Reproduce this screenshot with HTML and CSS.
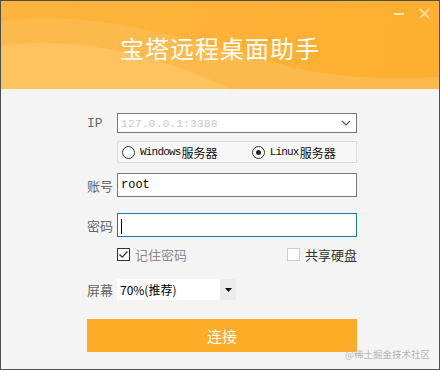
FILE: index.html
```html
<!DOCTYPE html>
<html lang="zh-CN">
<head>
    <meta charset="UTF-8">
    <title>宝塔远程桌面助手</title>
    <link rel="stylesheet" href="styles.css">
</head>
<body>

    <div class="window">
        <div class="header">
            <svg class="waves" width="438" height="88" viewBox="0 0 438 88" preserveAspectRatio="none">
                <path d="M0 20 C 80 10, 160 30, 250 55 C 300 70, 340 80, 438 76 L438 88 L0 88 Z" fill="#fdba4c"/>
                <path d="M0 45 C 70 35, 150 50, 230 88 L0 88 Z" fill="#fec25e"/>
            </svg>
            <div class="controls">
                <span class="min"></span>
                <svg class="close" width="11" height="11" viewBox="0 0 11 11">
                    <path d="M1 1 L10 10 M10 1 L1 10" stroke="#fde6b8" stroke-width="1.6"/>
                </svg>
            </div>
            <h1>宝塔远程桌面助手</h1>
        </div>

        <div class="form">
            <div class="row row-ip">
                <span class="label mono">IP</span>
                <div class="combo">
                    <span class="mono faded">127.0.0.1:3388</span>
                    <svg width="10" height="6" viewBox="0 0 10 6">
                        <path d="M1 1 L5 5 L9 1" fill="none" stroke="#555" stroke-width="1.1"/>
                    </svg>
                </div>
            </div>

            <div class="row row-os">
                <span class="label"></span>
                <div class="radios">
                    <span class="radio"><i class="dot"></i><span class="mono narrow">Windows</span>服务器</span>
                    <span class="radio on"><i class="dot"></i><span class="mono narrow">Linux</span>服务器</span>
                </div>
            </div>

            <div class="row row-user">
                <span class="label">账号</span>
                <div class="field mono">root</div>
            </div>

            <div class="row row-pass">
                <span class="label">密码</span>
                <div class="field focus"><i class="caret"></i></div>
            </div>

            <div class="row row-checks">
                <span class="label"></span>
                <div class="checks">
                    <span class="check on">
                        <svg width="13" height="13" viewBox="0 0 13 13">
                            <rect x="0.5" y="0.5" width="12" height="12" fill="#fff" stroke="#333"/>
                            <path d="M2.5 6.5 L5.2 9.2 L10.5 3.5" fill="none" stroke="#333" stroke-width="1.2"/>
                        </svg>
                        记住密码
                    </span>
                    <span class="check">
                        <svg width="13" height="13" viewBox="0 0 13 13">
                            <rect x="0.5" y="0.5" width="12" height="12" fill="#fff" stroke="#ccc"/>
                        </svg>
                        共享硬盘
                    </span>
                </div>
            </div>

            <div class="row row-screen">
                <span class="label">屏幕</span>
                <div class="dropdown">
                    <span class="value">70%(推荐)</span>
                    <span class="arrow">
                        <svg width="7" height="4" viewBox="0 0 7 4"><path d="M0 0 L7 0 L3.5 4 Z" fill="#111"/></svg>
                    </span>
                </div>
            </div>

            <button class="connect">连接</button>
        </div>

        <span class="watermark">@稀土掘金技术社区</span>
    </div>

</body>
</html>
```

FILE: styles.css
```css
body {
    margin: 0;
    font-family: "Noto Sans CJK SC", "Noto Sans", sans-serif;
    background-color: #f3f3f3;
}
.window {
    position: relative;
    width: 440px;
    height: 370px;
    box-sizing: border-box;
    border: 1px solid #4d4d4d;
    background: #f4f4f4;
    overflow: hidden;
}
.header {
    position: relative;
    height: 88px;
    background: linear-gradient(100deg, #fdb43e 0%, #fdb135 60%, #fdaf2e 100%);
}
.waves {
    position: absolute;
    left: 0;
    top: 0;
}
.controls {
    position: absolute;
    top: 7px;
    right: 9px;
    display: flex;
    align-items: center;
    gap: 15px;
}
.min {
    display: block;
    width: 10px;
    height: 2px;
    background: #fde6b8;
    margin-top: 1px;
}
.header h1 {
    position: relative;
    margin: 0;
    padding-top: 30px;
    text-align: center;
    color: #fff;
    font-size: 24px;
    font-weight: normal;
    line-height: 34px;
    letter-spacing: 1px;
}
.form {
    padding-left: 86px;
    width: 270px;
}
.mono {
    font-family: "Liberation Mono", "DejaVu Sans Mono", monospace;
}
.narrow {
    font-size: 11px;
    letter-spacing: -0.8px;
    margin-right: 1px;
}
.row {
    display: flex;
    align-items: center;
    font-size: 13px;
    color: #666;
    white-space: nowrap;
}
.label {
    width: 30px;
    flex-shrink: 0;
}
.row-ip {
    margin-top: 24px;
}
.combo {
    width: 240px;
    height: 20px;
    box-sizing: border-box;
    border: 1px solid #7a7a7a;
    background: #fff;
    display: flex;
    align-items: center;
    justify-content: space-between;
    padding: 0 5px 0 3px;
    font-size: 11.5px;
}
.faded {
    color: #c8c8c8;
}
.row-os {
    margin-top: 8px;
}
.radios {
    width: 240px;
    height: 22px;
    box-sizing: border-box;
    border: 1px solid #dcdcdc;
    background: #f7f7f7;
    display: flex;
    align-items: center;
    padding-left: 4px;
    gap: 34px;
    color: #111;
    font-size: 12px;
}
.radio {
    display: flex;
    align-items: center;
}
.dot {
    width: 11px;
    height: 11px;
    border: 1px solid #333;
    border-radius: 50%;
    background: #fff;
    margin-right: 5px;
    position: relative;
}
.radio.on .dot::after {
    content: "";
    position: absolute;
    left: 3px;
    top: 3px;
    width: 5px;
    height: 5px;
    border-radius: 50%;
    background: #222;
}
.row-user {
    margin-top: 10px;
}
.field {
    width: 240px;
    height: 24px;
    box-sizing: border-box;
    border: 1px solid #7a7a7a;
    background: #fff;
    color: #000;
    padding: 0 3px;
    line-height: 22px;
    font-size: 12px;
}
.row-pass {
    margin-top: 16px;
}
.field.focus {
    border-color: #1a78b8;
}
.caret {
    display: inline-block;
    width: 1px;
    height: 15px;
    background: #000;
    vertical-align: middle;
}
.row-checks {
    margin-top: 8px;
}
.checks {
    width: 240px;
    display: flex;
    justify-content: space-between;
}
.check {
    display: flex;
    align-items: center;
    gap: 5px;
    color: #333;
}
.check.on {
    color: #8a8a8a;
}
.row-screen {
    margin-top: 15px;
}
.dropdown {
    width: 119px;
    height: 21px;
    display: flex;
    background: #fff;
    color: #000;
    font-size: 12px;
}
.value {
    flex: 1;
    padding-left: 3px;
    line-height: 21px;
}
.arrow {
    width: 16px;
    background: #ececec;
    display: flex;
    align-items: center;
    justify-content: center;
}
.connect {
    display: block;
    width: 270px;
    height: 33px;
    margin-top: 19px;
    margin-left: 0;
    border: none;
    background-color: #fdac28;
    color: #fff;
    font-family: "Noto Sans CJK SC", sans-serif;
    font-size: 15px;
}
.watermark {
    position: absolute;
    right: 9px;
    bottom: 8px;
    font-size: 9.5px;
    color: #b5b5b5;
}
```
